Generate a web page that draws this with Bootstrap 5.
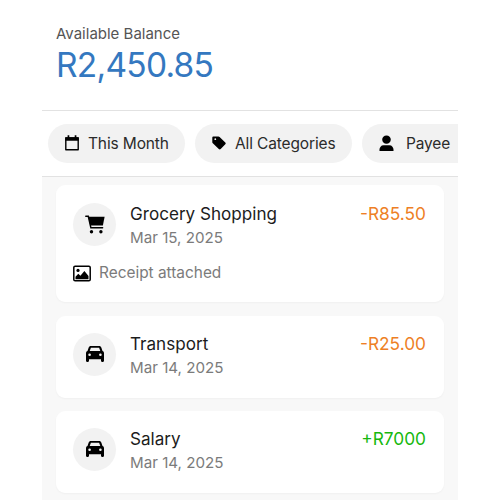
<!DOCTYPE html>
<html lang="en">
<head>
<meta charset="utf-8">
<meta name="viewport" content="width=device-width, initial-scale=1">
<title>Transactions</title>
<link href="https://cdn.jsdelivr.net/npm/bootstrap@5.3.0/dist/css/bootstrap.min.css" rel="stylesheet">
<style>
body{font-family:Inter,"Liberation Sans",sans-serif;background:#fff;height:500px;overflow:hidden;color:#1c1c1c}
.phone{width:416px;height:500px;margin-left:42px;background:#f8f8f8}
.balance{height:109.500px;padding:24px 14px 0}
.balance-label{font-size:15px;line-height:20px;color:#555}
.balance-value{font-size:33.500px;line-height:42px;color:#3478c0;letter-spacing:-.75px}
.filters{height:67px;padding:13px 0 0 6px;gap:10px;border-top:1px solid #e2e2e2;border-bottom:1px solid #e2e2e2}
.chip{height:39px;background:#f2f2f2;font-size:15.500px;letter-spacing:-.14px;line-height:39px;color:#2b2b2b;padding-left:17px}
.chip svg{color:#000}
.chip-month{width:137px;gap:9px}
.chip-cat{width:157px;gap:9px}
.chip-payee{width:137px;gap:12px}
.entries{padding:8px 14px 0;gap:13px}
.entry{border-radius:9px;box-shadow:0 1px 2px rgba(0,0,0,.035);padding:17px 18px 0 17px;height:82px}
.entry-tall{height:117px;margin-bottom:1px;padding-top:18px}
.avatar{width:43px;height:43px;background:#f2f2f2;color:#000;margin-right:14px}
.entry-name{font-size:17.100px;line-height:22px}
.entry-date{font-size:15.150px;line-height:20px;color:#7b7b7b;margin-top:3px}
.receipt{font-size:15.400px;line-height:20px;color:#7b7b7b;gap:8px;margin-top:15px}
.receipt svg{color:#000}
.amount{font-size:17.300px;line-height:22px}
.spent{color:#ee7f25}
.earned{color:#16b80e}
</style>
<script src="https://cdn.jsdelivr.net/npm/bootstrap@5.3.0/dist/js/bootstrap.bundle.min.js"></script>
</head>
<body>
<svg width="0" height="0" class="d-none">
<symbol id="car" viewBox="0 0 18 16"><path fill-rule="evenodd" d="M4.8 0h8.400c1.100 0 1.800.6 2.100 1.500L16.500 5c.9.4 1.500 1.200 1.500 2.200v7.600c0 .7-.4 1.100-1.100 1.100h-.8c-.7 0-1.100-.4-1.100-1.100v-1.600H3v1.600c0 .7-.4 1.100-1.100 1.100h-.8C.4 15.900 0 15.500 0 14.800V7.200C0 6.200.6 5.400 1.500 5L2.700 1.500C3 .6 3.700 0 4.800 0ZM4.900 1.700 3.700 5h10.600l-1.200-3.300ZM3.600 7.500a1.300 1.300 0 1 0 0 2.600 1.300 1.300 0 0 0 0-2.600Zm10.800 0a1.300 1.300 0 1 0 0 2.600 1.300 1.300 0 0 0 0-2.600Z" fill="currentColor"/></symbol>
</svg>
<main class="phone overflow-hidden">
<header class="balance bg-white">
<div class="balance-label">Available Balance</div>
<div class="balance-value">R2,450.85</div>
</header>
<nav class="filters d-flex bg-white overflow-hidden">
<div class="chip chip-month rounded-pill d-flex align-items-center flex-shrink-0 text-nowrap">
<svg width="14" height="16" viewBox="0 0 14 16"><path d="M.8 3h12.400v11.700H.8Z" fill="none" stroke="currentColor" stroke-width="1.400" stroke-linejoin="round"/><path d="M.3 2.300h13.400V5.800H.3ZM2.600.3h1.700v3H2.600Zm7.100 0h1.700v3H9.700Z" fill="currentColor"/></svg>
<span>This Month</span></div>
<div class="chip chip-cat rounded-pill d-flex align-items-center flex-shrink-0 text-nowrap">
<svg width="14" height="14" viewBox="0 0 14 14"><path fill-rule="evenodd" d="M1.200.5h5.300c.5 0 .8.2 1.100.5l5.700 5.500c.6.600.6 1.200 0 1.800l-4.600 4.800c-.6.600-1.300.6-1.900 0L.8 7.300C.5 7 .3 6.600.3 6.200V1.400c0-.5.4-.9.9-.9ZM3.300 2.300a.9.9 0 1 0 0 1.800.9.9 0 0 0 0-1.800Z" fill="currentColor"/></svg>
<span>All Categories</span></div>
<div class="chip chip-payee rounded-pill d-flex align-items-center flex-shrink-0 text-nowrap">
<svg width="15" height="17" viewBox="0 0 15 17"><path d="M7.500.5c2.500 0 4.300 1.700 4.300 4.100S10 8.800 7.500 8.800 3.200 7 3.200 4.600 5 .5 7.500.5ZM.4 15.200c0-3 1.700-5 4.200-5h5.800c2.500 0 4.200 2 4.200 5 0 .6-.3.9-.9.9H1.300c-.6 0-.9-.3-.9-.9Z" fill="currentColor"/></svg>
<span>Payee</span></div>
</nav>
<section class="entries d-flex flex-column">
<article class="entry entry-tall bg-white flex-shrink-0">
<div class="d-flex">
<div class="avatar rounded-circle d-flex align-items-center justify-content-center flex-shrink-0"><svg width="20" height="19" viewBox="0 0 20 19"><path d="M.8 1.300h2.500l2.600 11.500h11.700" fill="none" stroke="currentColor" stroke-width="1.500" stroke-linecap="round"/><path d="M3.400 1.800h16.200L17.900 10.500H5.300Z" fill="currentColor"/><circle cx="6.500" cy="16.800" r="1.700" fill="currentColor"/><circle cx="15.900" cy="16.800" r="1.700" fill="currentColor"/></svg></div>
<div><div class="entry-name">Grocery Shopping</div><div class="entry-date">Mar 15, 2025</div></div>
<div class="amount spent ms-auto">-R85.50</div>
</div>
<div class="receipt d-flex align-items-center">
<svg width="18" height="20" viewBox="0 -3 18 20"><rect x=".8" y=".3" width="16.400" height="14.400" rx="1.300" fill="none" stroke="currentColor" stroke-width="1.500"/><circle cx="5" cy="4.400" r="1.600" fill="currentColor"/><path d="M2.500 13.300V10.800l2.800-3 2.100 2 4-4.700 4.100 5v3.200Z" fill="currentColor"/></svg>
<span>Receipt attached</span></div>
</article>
<article class="entry bg-white d-flex flex-shrink-0">
<div class="avatar rounded-circle d-flex align-items-center justify-content-center flex-shrink-0"><svg width="18" height="16"><use href="#car"/></svg></div>
<div><div class="entry-name">Transport</div><div class="entry-date">Mar 14, 2025</div></div>
<div class="amount spent ms-auto">-R25.00</div>
</article>
<article class="entry bg-white d-flex flex-shrink-0">
<div class="avatar rounded-circle d-flex align-items-center justify-content-center flex-shrink-0"><svg width="18" height="16"><use href="#car"/></svg></div>
<div><div class="entry-name">Salary</div><div class="entry-date">Mar 14, 2025</div></div>
<div class="amount earned ms-auto">+R7000</div>
</article>
</section>
</main>
</body>
</html>
